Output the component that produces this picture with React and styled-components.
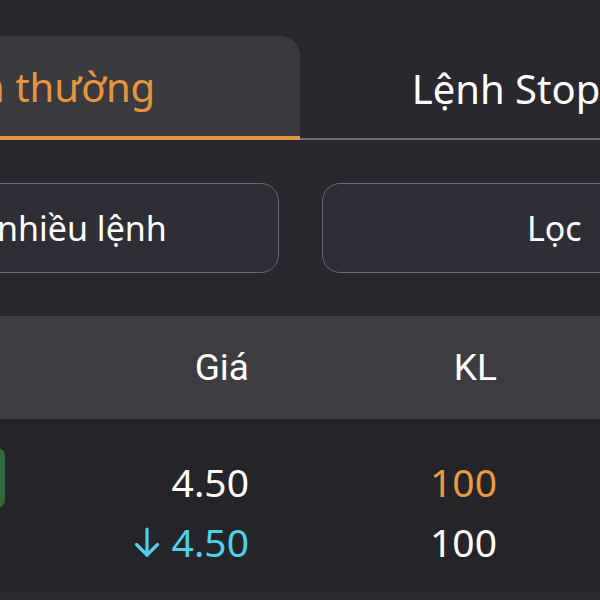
import React from 'react'
import styled, { createGlobalStyle } from 'styled-components'

const GlobalStyle = createGlobalStyle`
  html, body {
    margin: 0;
    padding: 0;
    background: #28272d;
  }
  body {
    font-family: "Noto Sans", "Open Sans", sans-serif;
    color: #fff;
  }
`

const Viewport = styled.div`
  width: 600px;
  height: 600px;
  overflow: hidden;
  display: flex;
  justify-content: center;
  background: #29282e;
`

const Screen = styled.div`
  flex-shrink: 0;
  width: 1066px;
  display: flex;
  flex-direction: column;
`

const TabBar = styled.div`
  display: grid;
  grid-template-columns: 1fr 1fr;
  padding-top: 36px;
`

const Tab = styled.div`
  height: 100px;
  display: flex;
  align-items: center;
  justify-content: center;
  font-size: 40px;
  color: ${p => (p.$active ? '#e8953a' : '#ffffff')};
  background: ${p => (p.$active ? '#3b3a3f' : 'transparent')};
  border-radius: 20px 20px 0 0;
  border-bottom: ${p => (p.$active ? '4px solid #e8973c' : '2px solid #6f6e74')};
  margin-top: ${p => (p.$active ? '0' : '2px')};
`

const Actions = styled.div`
  display: grid;
  grid-template-columns: 1fr 1fr;
  gap: 43px;
  padding: 43px 46px 43px;
`

const ActionButton = styled.div`
  height: 88px;
  display: flex;
  align-items: center;
  justify-content: center;
  font-size: 34px;
  color: #fff;
  background: #2f2e36;
  border: 1px solid #6b6a72;
  border-radius: 18px;
`

const Row = styled.div`
  display: grid;
  grid-template-columns: 250px 232px 248px 1fr;
  background: ${p => p.$bg};
`

const HeadCell = styled.div`
  height: 103px;
  display: flex;
  align-items: center;
  justify-content: ${p => (p.$start ? 'flex-start' : 'flex-end')};
  padding-left: ${p => (p.$start ? '30px' : '0')};
  font-family: Roboto, "Noto Sans", sans-serif;
  font-size: 37px;
  color: #fff;
`

const BadgeCell = styled.div`
  display: flex;
  justify-content: flex-end;
  align-items: flex-start;
  padding: 29px 12px 0 0;
`

const SideBadge = styled.div`
  width: 60px;
  height: 60px;
  border-radius: 8px;
  background: #2f6a3d;
  color: #fff;
  font-size: 24px;
  display: flex;
  align-items: center;
  justify-content: center;
`

const NumCell = styled.div`
  padding: 33px 0 20px;
  display: flex;
  flex-direction: column;
  align-items: flex-end;
`

const Num = styled.div`
  height: 60px;
  line-height: 60px;
  font-size: 39px;
  display: flex;
  align-items: center;
  gap: 12px;
  color: ${p => p.$color || '#fff'};
`

const NextRow = styled.div`
  height: 60px;
  background: #2b2a30;
`

const DownArrow = ({ color }) => (
  <svg width="26" height="31" viewBox="0 0 26 31" fill="none">
    <path d="M13 2 V28" stroke={color} strokeWidth="3.2" strokeLinecap="round" />
    <path d="M2.5 17.5 L13 28 L23.5 17.5" stroke={color} strokeWidth="3.2" strokeLinecap="round" strokeLinejoin="round" />
  </svg>
)

export default function App() {
  return (
    <>
      <GlobalStyle />
      <Viewport>
        <Screen>
          <TabBar>
            <Tab $active>Lệnh thường</Tab>
            <Tab>Lệnh Stop Order</Tab>
          </TabBar>
          <Actions>
            <ActionButton>Hủy nhiều lệnh</ActionButton>
            <ActionButton>Lọc</ActionButton>
          </Actions>
          <Row $bg="#3d3c41">
            <HeadCell $start>Mã CK</HeadCell>
            <HeadCell>Giá</HeadCell>
            <HeadCell>KL</HeadCell>
            <HeadCell />
          </Row>
          <Row $bg="#252428">
            <BadgeCell>
              <SideBadge>M</SideBadge>
            </BadgeCell>
            <NumCell>
              <Num>4.50</Num>
              <Num $color="#4cd3ec">
                <DownArrow color="#4cd3ec" />
                4.50
              </Num>
            </NumCell>
            <NumCell>
              <Num $color="#ec9a3c">100</Num>
              <Num>100</Num>
            </NumCell>
            <NumCell />
          </Row>
          <NextRow />
        </Screen>
      </Viewport>
    </>
  )
}
